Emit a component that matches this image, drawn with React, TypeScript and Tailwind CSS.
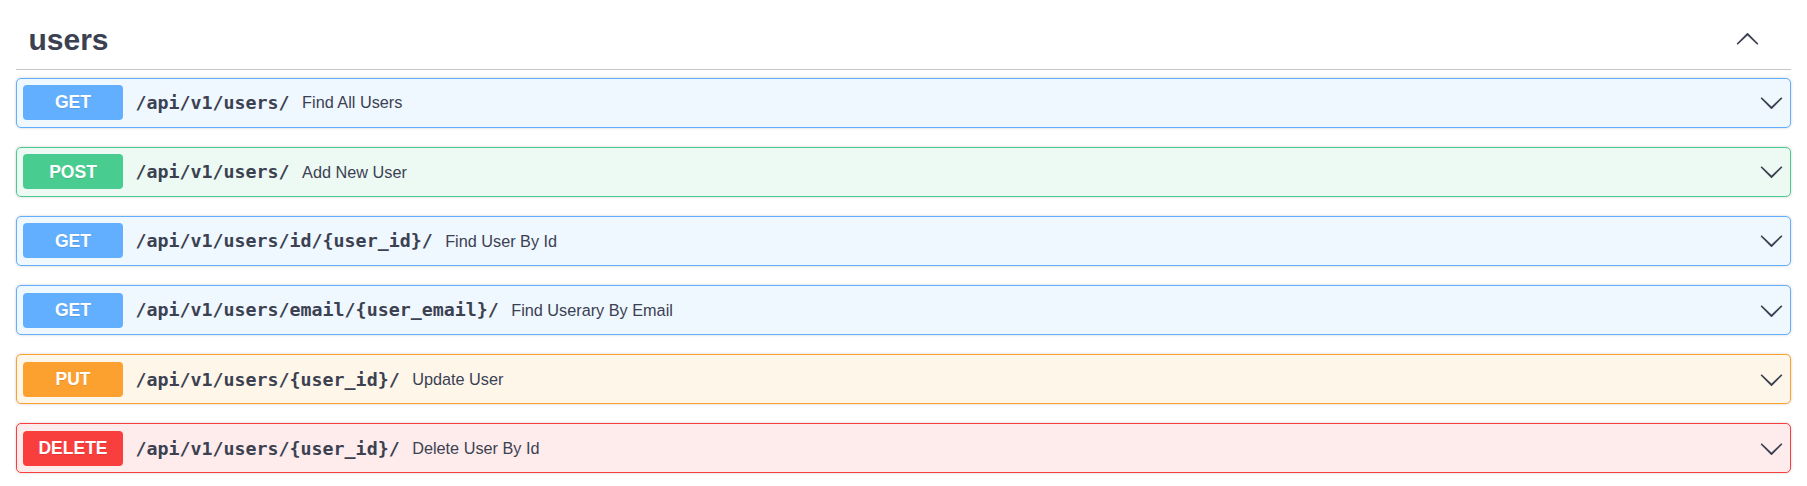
import React from "react";

type Method = "GET" | "POST" | "PUT" | "DELETE";

const styles: Record<Method, { box: string; badge: string }> = {
  GET: { box: "border-[#61affe] bg-[#eff7ff]", badge: "bg-[#61affe]" },
  POST: { box: "border-[#49cc90] bg-[#edfaf4]", badge: "bg-[#49cc90]" },
  PUT: { box: "border-[#fca130] bg-[#fff6ea]", badge: "bg-[#fca130]" },
  DELETE: { box: "border-[#f93e3e] bg-[#feecec]", badge: "bg-[#f93e3e]" },
};

const ops: { method: Method; path: string; summary: string }[] = [
  { method: "GET", path: "/api/v1/users/", summary: "Find All Users" },
  { method: "POST", path: "/api/v1/users/", summary: "Add New User" },
  { method: "GET", path: "/api/v1/users/id/{user_id}/", summary: "Find User By Id" },
  { method: "GET", path: "/api/v1/users/email/{user_email}/", summary: "Find Userary By Email" },
  { method: "PUT", path: "/api/v1/users/{user_id}/", summary: "Update User" },
  { method: "DELETE", path: "/api/v1/users/{user_id}/", summary: "Delete User By Id" },
];

function Chevron({ up = false }: { up?: boolean }) {
  return (
    <svg
      viewBox="0 0 20 20"
      className={`w-[25px] h-[25px] shrink-0 ${up ? "rotate-180" : ""}`}
      fill="currentColor"
    >
      <path d="M17.418 6.109c.272-.268.709-.268.979 0s.271.701 0 .969l-7.908 7.83c-.27.268-.707.268-.979 0l-7.908-7.83c-.27-.268-.27-.701 0-.969.271-.268.709-.268.979 0L10 13.25l7.418-7.141z" />
    </svg>
  );
}

export default function App() {
  return (
    <div className="bg-white min-h-[486px] px-4 pt-[10px] text-[#3b4151] font-['Liberation_Sans',Arial,sans-serif]">
      {/* Tag header */}
      <div className="flex items-center border-b border-[#c4c6cb] pt-[12.5px] pb-[12.5px] pl-[12.5px] pr-[31px] mb-[7.5px]">
        <h3 className="flex-1 text-[30px] leading-[34px] font-bold">users</h3>
        <Chevron up />
      </div>

      {/* Operations */}
      {ops.map((op, i) => (
        <div
          key={i}
          className={`flex items-center h-[50px] mb-[19.2px] px-[6px] border rounded-[5px] shadow-[0_0_3px_rgba(0,0,0,0.19)] ${styles[op.method].box}`}
        >
          <span
            className={`min-w-[100px] h-[35px] flex items-center justify-center rounded-[4px] text-white text-[17.5px] font-bold [text-shadow:0_1px_0_rgba(0,0,0,0.1)] ${styles[op.method].badge}`}
          >
            {op.method}
          </span>
          <span className="px-[12.5px] text-[18.3px] font-bold font-['DejaVu_Sans_Mono',monospace]">
            {op.path}
          </span>
          <span className="flex-1 text-[16.25px]">{op.summary}</span>
          <Chevron />
        </div>
      ))}
    </div>
  );
}
